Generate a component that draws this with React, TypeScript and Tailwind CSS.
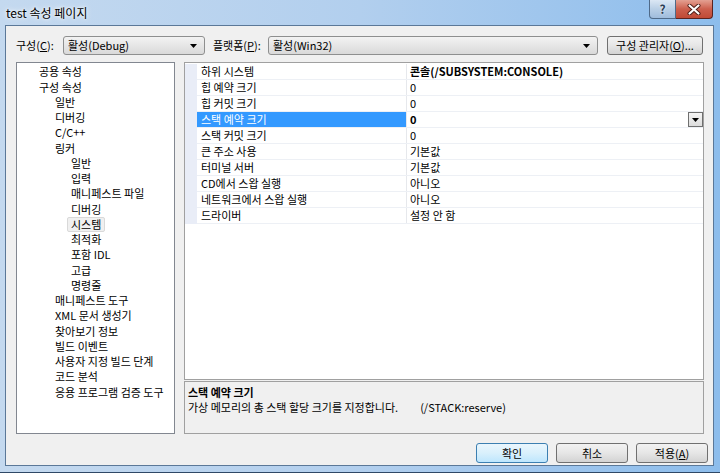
import React from "react";

// 트리 항목: [텍스트, 들여쓰기 단계]
const treeItems: [string, number][] = [
  ["공용 속성", 0],
  ["구성 속성", 0],
  ["일반", 1],
  ["디버깅", 1],
  ["C/C++", 1],
  ["링커", 1],
  ["일반", 2],
  ["입력", 2],
  ["매니페스트 파일", 2],
  ["디버깅", 2],
  ["시스템", 2],
  ["최적화", 2],
  ["포함 IDL", 2],
  ["고급", 2],
  ["명령줄", 2],
  ["매니페스트 도구", 1],
  ["XML 문서 생성기", 1],
  ["찾아보기 정보", 1],
  ["빌드 이벤트", 1],
  ["사용자 지정 빌드 단계", 1],
  ["코드 분석", 1],
  ["응용 프로그램 검증 도구", 1],
];

const indent = ["pl-[18px]", "pl-[34px]", "pl-[50px]"];

const properties: { name: string; value: string; bold?: boolean; selected?: boolean }[] = [
  { name: "하위 시스템", value: "콘솔(/SUBSYSTEM:CONSOLE)", bold: true },
  { name: "힙 예약 크기", value: "0" },
  { name: "힙 커밋 크기", value: "0" },
  { name: "스택 예약 크기", value: "0", bold: true, selected: true },
  { name: "스택 커밋 크기", value: "0" },
  { name: "큰 주소 사용", value: "기본값" },
  { name: "터미널 서버", value: "기본값" },
  { name: "CD에서 스왑 실행", value: "아니오" },
  { name: "네트워크에서 스왑 실행", value: "아니오" },
  { name: "드라이버", value: "설정 안 함" },
];

function DownArrow() {
  return (
    <svg width="7" height="4" viewBox="0 0 7 4">
      <path d="M0 0H7L3.5 4Z" fill="#000" />
    </svg>
  );
}

function Combo({ text, width }: { text: string; width: string }) {
  return (
    <div
      className={`${width} h-[19px] flex items-center justify-between pl-[4px] pr-[7px] border border-[#8e8f8f] rounded-[3px] bg-linear-to-b from-[#f3f3f3] via-[#e6e6e6] to-[#d9d9d9]`}
    >
      <span>{text}</span>
      <DownArrow />
    </div>
  );
}

function WinButton({ children, primary }: { children: React.ReactNode; primary?: boolean }) {
  return (
    <div
      className={`w-[72px] h-[20px] flex items-center justify-center rounded-[3px] border ${
        primary
          ? "border-[#3c7fb1] bg-linear-to-b from-[#eaf6fd] via-[#d9f0fc] to-[#bee6fd]"
          : "border-[#707070] bg-linear-to-b from-[#f2f2f2] via-[#e6e6e6] to-[#d3d3d3]"
      }`}
    >
      {children}
    </div>
  );
}

export default function App() {
  return (
    <div className="w-[720px] h-[473px] flex flex-col bg-linear-to-r from-[#c4d9ef] via-[#b2cfee] to-[#8dbdec] border-b border-[#2f4866] text-[11px] text-black font-[family-name:'Noto_Sans_CJK_KR',sans-serif] select-none">
      {/* 타이틀 바 */}
      <div className="h-[25px] flex items-start justify-between">
        <div className="h-[25px] flex items-center pl-[6px] text-[12px] [text-shadow:0_0_6px_#ffffff,0_0_3px_#ffffff]">
          test 속성 페이지
        </div>
        <div className="flex mr-[7px]">
          <div className="w-[27px] h-[19px] flex items-center justify-center border border-[#4f6a88] border-t-0 rounded-bl-[4px] bg-linear-to-b from-[#dbe7f4] via-[#b9cfe6] to-[#9fbcdc] text-[12px] font-bold text-[#2b3d55] [text-shadow:0_0_2px_#ffffff]">
            ?
          </div>
          <div className="w-[37px] h-[19px] flex items-center justify-center border border-[#5a2320] border-t-0 border-l-0 rounded-br-[4px] bg-linear-to-b from-[#e3a092] via-[#cc5f4d] to-[#c04a36]">
            <svg width="14" height="11" viewBox="0 0 14 11">
              <path d="M2.5 1.5L11.5 9.5M11.5 1.5L2.5 9.5" stroke="#4a1a14" strokeWidth="4" strokeLinecap="round" />
              <path d="M2.5 1.5L11.5 9.5M11.5 1.5L2.5 9.5" stroke="#ffffff" strokeWidth="2.2" strokeLinecap="round" />
            </svg>
          </div>
        </div>
      </div>

      {/* 클라이언트 영역 */}
      <div className="flex-1 flex pl-[5px] pr-[6px]">
        <div className="flex-1 flex flex-col border border-[#5b7898] bg-[#f0f0f0]">
          {/* 구성 / 플랫폼 */}
          <div className="flex items-center pt-[10px] pl-[10px]">
            <span className="w-[47px]">
              구성(<span className="underline">C</span>):
            </span>
            <Combo text="활성(Debug)" width="w-[142px]" />
            <span className="w-[55px] ml-[8px]">
              플랫폼(<span className="underline">P</span>):
            </span>
            <Combo text="활성(Win32)" width="w-[330px]" />
            <div className="w-[96px] h-[19px] ml-[9px] flex items-center justify-center rounded-[3px] border border-[#707070] bg-linear-to-b from-[#f2f2f2] via-[#e6e6e6] to-[#d3d3d3]">
              구성 관리자(<span className="underline">O</span>)...
            </div>
          </div>

          {/* 트리 + 속성 그리드 */}
          <div className="flex mt-[7px] pl-[10px] h-[372px]">
            <div className="w-[159px] border border-[#828790] bg-white pt-[1px]">
              {treeItems.map(([label, level], i) => (
                <div key={i} className={`h-[15.25px] flex items-center ${indent[level]}`}>
                  <span
                    className={`px-[3px] h-[15px] flex items-center rounded-[2px] border ${
                      label === "시스템" && level === 2
                        ? "border-[#d9d9d9] bg-[#f0f0f0]"
                        : "border-transparent"
                    }`}
                  >
                    {label}
                  </span>
                </div>
              ))}
            </div>

            <div className="w-[520px] ml-[9px] flex flex-col">
              <div className="flex-1 border border-[#a0a0a0] bg-white pt-[1px]">
                <div className="flex">
                  <div className="w-[12px] bg-[#e9edf7]" />
                  <div className="flex-1">
                    {properties.map((p) => (
                      <div key={p.name} className="h-[16px] flex border-b border-[#edf0f5]">
                        <div
                          className={`w-[210px] flex items-center pl-[4px] border-r border-[#e6e8ec] ${
                            p.selected ? "bg-[#3399ff] text-white" : ""
                          }`}
                        >
                          {p.name}
                        </div>
                        <div className={`flex-1 flex items-center justify-between pl-[3px] ${p.bold ? "font-bold" : ""}`}>
                          <span>{p.value}</span>
                          {p.selected && (
                            <div className="w-[15px] h-[15px] flex items-center justify-center border border-[#6f6f6f] bg-linear-to-b from-[#f5f5f5] to-[#dcdcdc]">
                              <DownArrow />
                            </div>
                          )}
                        </div>
                      </div>
                    ))}
                  </div>
                </div>
              </div>
              <div className="h-[53px] mt-[1px] border border-[#a0a0a0] bg-[#f0f0f0] pl-[3px] pt-[3px] leading-[15px]">
                <div className="font-bold">스택 예약 크기</div>
                <div>
                  가상 메모리의 총 스택 할당 크기를 지정합니다.
                  <span className="ml-[22px]">(/STACK:reserve)</span>
                </div>
              </div>
            </div>
          </div>

          {/* 버튼 */}
          <div className="flex justify-end gap-[8px] mt-[9px] pr-[5px]">
            <WinButton primary>확인</WinButton>
            <WinButton>취소</WinButton>
            <WinButton>
              적용(<span className="underline">A</span>)
            </WinButton>
          </div>
        </div>
      </div>
      <div className="h-[6px]" />
    </div>
  );
}
